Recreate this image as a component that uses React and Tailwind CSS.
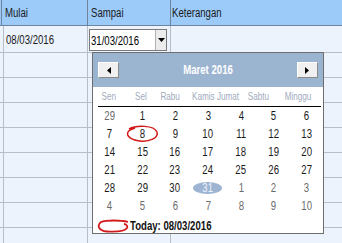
import React from 'react';

const font = { fontFamily: '"Liberation Sans", Arial, sans-serif' };

const dayNames = ['Sen', 'Sel', 'Rabu', 'Kamis', 'Jumat', 'Sabtu', 'Minggu'];

const buildCells = () => {
  const cells = [{ d: 29, other: true }];
  for (let d = 1; d <= 31; d++) cells.push({ d, sel: d === 31, mark: d === 8 });
  for (let d = 1; d <= 10; d++) cells.push({ d, other: true });
  return cells;
};

const Row = ({ first, children }) => (
  <div className={first ? 'flex h-[27px] border-b border-[#b9bec6]' : 'flex h-[25px] border-b border-[#b9bec6] shrink-0'}>
    {children}
  </div>
);

const Calendar = () => {
  const cells = buildCells();
  return (
    <div className="absolute left-[92px] top-[52px] w-[232px] h-[182px] border border-[#6e6e6e] bg-white overflow-hidden">
      <div className="flex items-center justify-between h-[34px] bg-[#9bb4d0] px-[5px]">
        <button className="w-[21px] h-[16px] flex items-center justify-center bg-[#f0f0f0] border border-t-white border-l-white border-b-[#8a8a8a] border-r-[#8a8a8a]">
          <svg width="4" height="7" viewBox="0 0 4 7"><path d="M4 0 L0 3.5 L4 7 Z" fill="#000" /></svg>
        </button>
        <span className="inline-block scale-x-[0.8] text-[12px] font-bold text-white">Maret 2016</span>
        <button className="w-[21px] h-[16px] flex items-center justify-center bg-[#f0f0f0] border border-t-white border-l-white border-b-[#8a8a8a] border-r-[#8a8a8a]">
          <svg width="4" height="7" viewBox="0 0 4 7"><path d="M0 0 L4 3.5 L0 7 Z" fill="#000" /></svg>
        </button>
      </div>
      <div className="grid grid-cols-[32px_32px_26px_40px_10px_50px_30px] h-[19px] items-center text-[11px] text-[#9fabbd]">
        {dayNames.map(n => (
          <div key={n} className="flex justify-center">
            <span className="inline-block scale-x-[0.74] whitespace-nowrap">{n}</span>
          </div>
        ))}
      </div>
      <div className="h-px bg-black ml-[5px] mr-[2px]" />
      <div className="grid grid-cols-7 text-[12px]">
        {cells.map((c, i) => (
          <div key={i} className="relative h-[18px] flex items-center justify-center">
            {c.sel ? (
              <span className="w-[29px] h-[12px] rounded-[50%] bg-[#9db5d3] flex items-center justify-center text-[#eef3fa]">
                <span className="inline-block scale-x-[0.8]">{c.d}</span>
              </span>
            ) : (
              <span className={c.other ? 'inline-block scale-x-[0.8] text-[#6b6b6b]' : 'inline-block scale-x-[0.8] text-[#1a1a1a]'}>{c.d}</span>
            )}
            {c.mark && (
              <svg className="absolute inset-0 overflow-visible" width="33" height="18" viewBox="0 0 33 18">
                <path d="M3 4 C 10 0, 28 0, 31 7 C 33 13, 23 17, 14 16 C 5 15, 0 11, 2 7 C 3 5, 6 4, 9 3" fill="none" stroke="#d21919" strokeWidth="1.5" />
              </svg>
            )}
          </div>
        ))}
      </div>
      <div className="flex items-center h-[15px] mt-[3px] pl-[4px]">
        <svg width="32" height="14" viewBox="0 0 32 14" className="shrink-0">
          <path d="M31 3 C 24 1, 9 1, 4 3 C 0 6, 1 12, 10 12.5 C 19 13, 28 12, 30 9 C 31 7, 29 5, 27 5" fill="none" stroke="#d21919" strokeWidth="1.8" />
        </svg>
        <span className="inline-block scale-x-[0.8] origin-left text-[12px] font-bold text-[#111] whitespace-nowrap ml-[1px]">Today: 08/03/2016</span>
      </div>
    </div>
  );
};

const App = () => {
  const rest = [0, 1, 2, 3, 4, 5, 6, 7];
  return (
    <div className="relative w-[342px] h-[243px] overflow-hidden bg-[#ecf3fd] text-[#1a1a1a]" style={font}>
      <div className="flex h-[26px] bg-[#9ccbfa] border-b border-[#6f849c] text-[12px]">
        <div className="w-[1px]" />
        <div className="w-[86px] border-l border-[#6f849c] flex items-center pl-[3px]">
          <span className="inline-block scale-x-[0.8] origin-left">Mulai</span>
        </div>
        <div className="w-[83px] border-l border-[#6f849c] flex items-center pl-[3px]">
          <span className="inline-block scale-x-[0.8] origin-left">Sampai</span>
        </div>
        <div className="flex-1 border-l border-[#6f849c] flex items-center pl-[1px]">
          <span className="inline-block scale-x-[0.8] origin-left">Keterangan</span>
        </div>
      </div>
      <Row first>
        <div className="w-[3px]" />
        <div className="w-[84px] border-l border-[#b9bec6] flex items-start pt-[5px] pl-[2px] text-[12px]">
          <span className="inline-block scale-x-[0.8] origin-left">08/03/2016</span>
        </div>
        <div className="w-[83px] border-l border-[#b9bec6] pl-[1px] pt-[3px]">
          <div className="flex w-[78px] h-[22px] bg-white border border-[#7a7a7a] text-[12px]">
            <div className="flex-1 flex items-center pl-[1px] pt-[1px]">
              <span className="inline-block scale-x-[0.8] origin-left text-black">31/03/2016</span>
            </div>
            <div className="w-[11px] flex items-center justify-center bg-[#ececec] border-l border-[#b0b0b0]">
              <svg width="7" height="4" viewBox="0 0 7 4"><path d="M0 0 L7 0 L3.5 4 Z" fill="#000" /></svg>
            </div>
          </div>
        </div>
        <div className="flex-1 border-l border-[#b9bec6]" />
      </Row>
      {rest.map(r => (
        <Row key={r}>
          <div className="w-[3px]" />
          <div className="w-[84px] border-l border-[#b9bec6]" />
          <div className="w-[83px] border-l border-[#b9bec6]" />
          <div className="flex-1 border-l border-[#b9bec6]" />
        </Row>
      ))}
      <Calendar />
    </div>
  );
};

export default App;
